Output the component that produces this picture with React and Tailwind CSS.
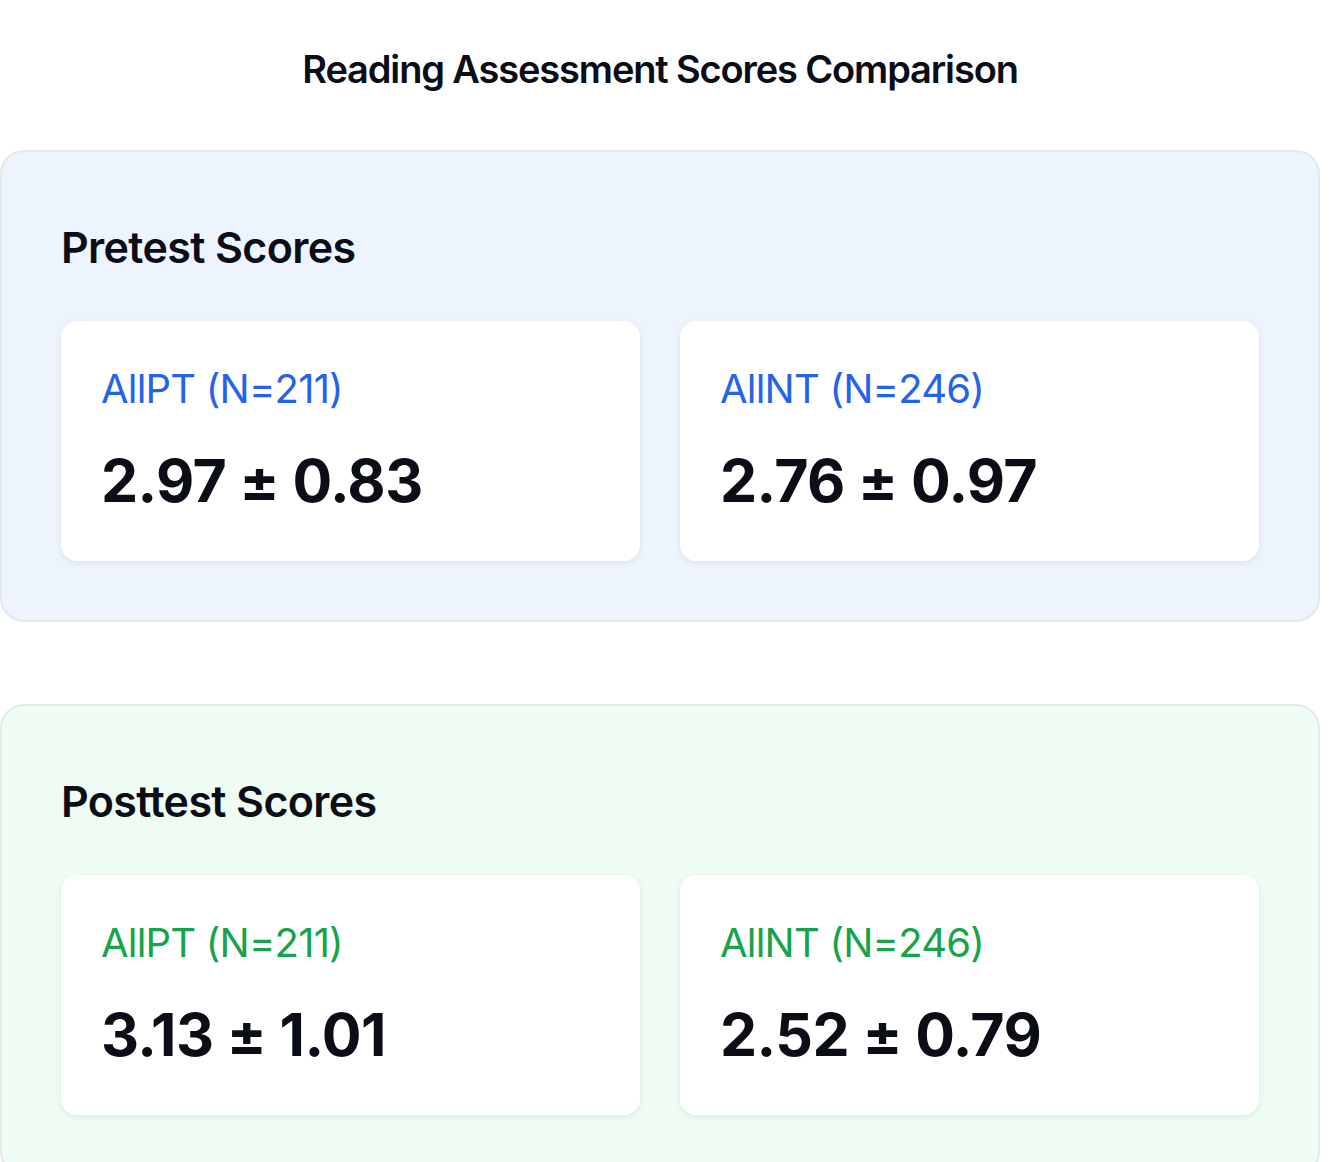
import React from 'react';

const sections = [
  {
    title: 'Pretest Scores',
    bg: 'bg-[#edf4fe]',
    accent: 'text-[#2563eb]',
    groups: [
      { label: 'AllPT (N=211)', value: '2.97 ± 0.83' },
      { label: 'AllNT (N=246)', value: '2.76 ± 0.97' },
    ],
  },
  {
    title: 'Posttest Scores',
    bg: 'bg-[#effcf3]',
    accent: 'text-[#16a34a]',
    groups: [
      { label: 'AllPT (N=211)', value: '3.13 ± 1.01' },
      { label: 'AllNT (N=246)', value: '2.52 ± 0.79' },
    ],
  },
];

const ScoreCard = ({ label, value, accent }) => (
  <div className="bg-white rounded-2xl shadow-[0_2px_6px_rgba(0,0,0,0.08)] h-[240px] px-10 pt-[46px]">
    <div className={`text-[40px] leading-[44px] tracking-[-0.02em] ${accent}`}>{label}</div>
    <div className="mt-[38px] text-[59px] leading-[64px] font-bold tracking-[-0.01em] text-[#0b0d17]">{value}</div>
  </div>
);

const App = () => {
  return (
    <div className="w-[1320px] bg-white font-['Inter',sans-serif] pb-20">
      <h1 className="pt-[45px] text-center text-[38px] leading-[48px] font-semibold tracking-[-0.03em] text-[#0b0d17]">
        Reading Assessment Scores Comparison
      </h1>

      <div className="mt-[57px] flex flex-col gap-[82px]">
        {sections.map((section) => (
          <div
            key={section.title}
            className={`${section.bg} border-2 border-[#e4e7ec] rounded-3xl px-[59px] pt-[71px] pb-[59px]`}
          >
            <h2 className="text-[43px] leading-[48px] font-semibold tracking-[-0.015em] text-[#0b0d17]">
              {section.title}
            </h2>
            <div className="mt-[50px] grid grid-cols-2 gap-10">
              {section.groups.map((g) => (
                <ScoreCard key={g.label} label={g.label} value={g.value} accent={section.accent} />
              ))}
            </div>
          </div>
        ))}
      </div>
    </div>
  );
};

export default App;
